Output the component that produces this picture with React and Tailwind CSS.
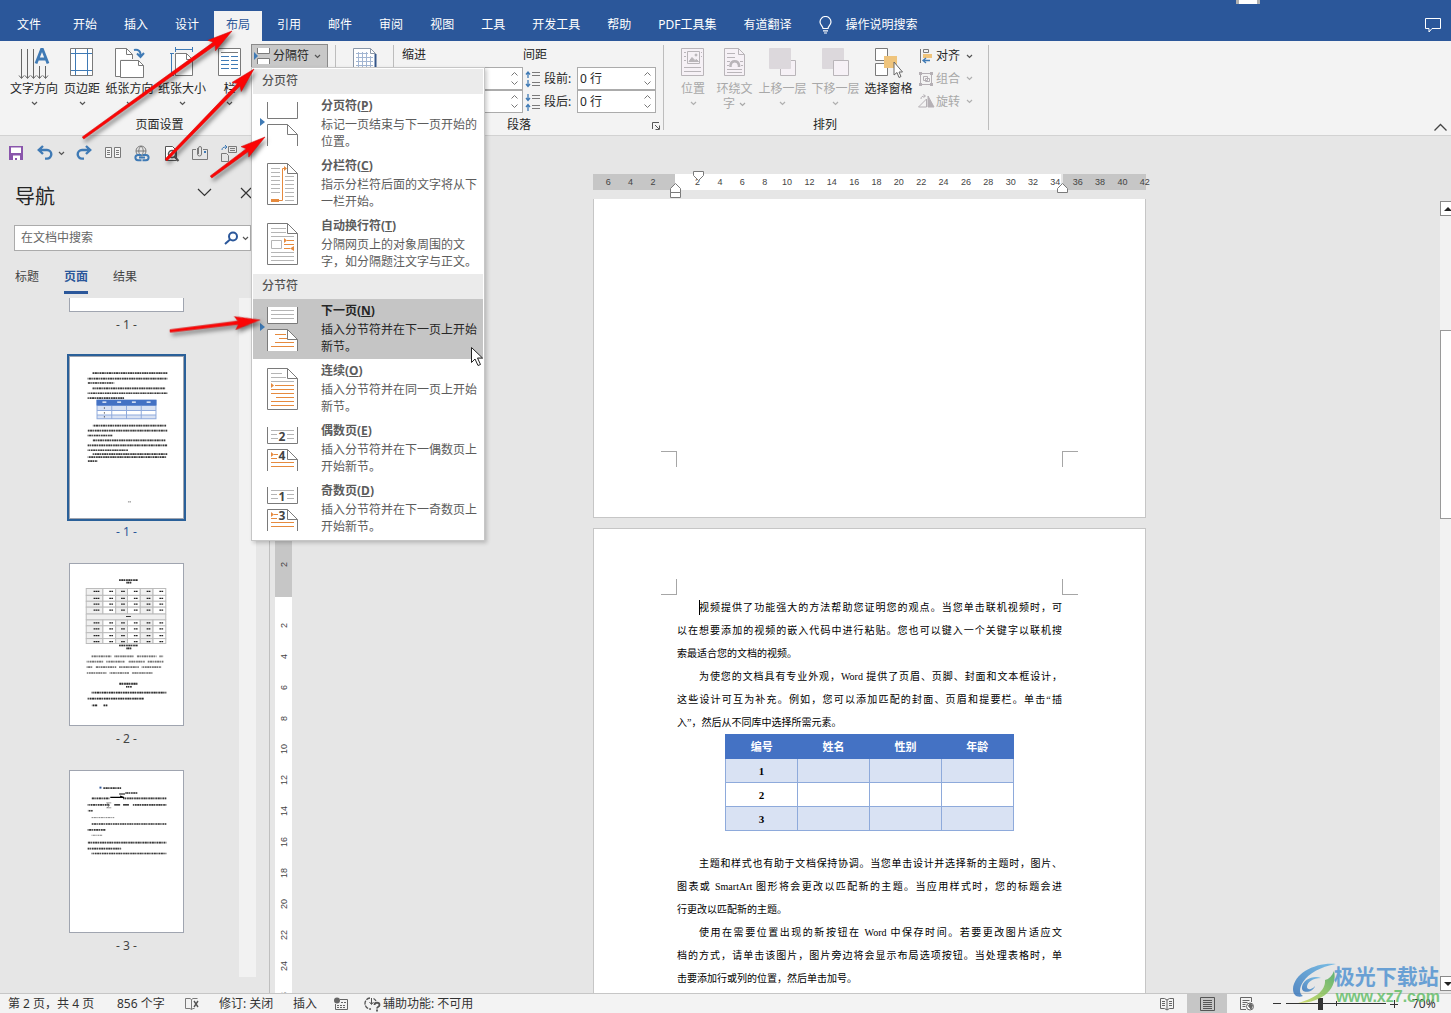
import React from "react";

const Caret = ({ className = "text-[#555]" }) => (
  <svg width="7" height="5" viewBox="0 0 7 5" className={`shrink-0 ${className}`} fill="none" stroke="currentColor" strokeWidth="1.2">
    <path d="M1 1l2.5 2.5L6 1" />
  </svg>
);

/* ---------- top tabs ---------- */

const TABS = ["开始", "插入", "设计", "布局", "引用", "邮件", "审阅", "视图", "工具", "开发工具", "帮助", "PDF工具集", "有道翻译"];

function TopTabs() {
  return (
    <header className="relative flex h-[41px] shrink-0 items-end bg-[#2b579a] pl-[5px] pr-[9px] text-white">
      <nav className="flex items-end gap-[3px]">
        <button className="mr-[5px] h-[30px] whitespace-nowrap px-3 pb-[3px]">文件</button>
        {TABS.map((t) => (
          <button
            key={t}
            className={`h-[30px] whitespace-nowrap px-3 pb-[3px] ${t === "布局" ? "bg-[#f3f3f3] text-[#2b579a]" : ""}`}
          >
            {t}
          </button>
        ))}
      </nav>
      <button className="ml-4 flex h-[30px] items-center gap-[13px] whitespace-nowrap pb-[3px]">
        <svg width="13" height="18" viewBox="0 0 13 18" fill="none" stroke="currentColor" strokeWidth="1.2">
          <path d="M4 12.500c0-2.500-3-3.500-3-6.500a5.300 5.300 0 0 1 11 0c0 3-3 4-3 6.500zM4 14.800h5M5 17h3" />
        </svg>
        操作说明搜索
      </button>
      <button aria-label="批注" className="mb-[7px] ml-auto">
        <svg width="17" height="16" viewBox="0 0 17 16" fill="none" stroke="currentColor" strokeWidth="1">
          <path d="M.5.5h15v10H7l-3 3.500v-3.500H.5z" />
        </svg>
      </button>
      <span className="absolute right-[191px] top-0 h-1 w-6 border-x-[3px] border-[#b0b0b0] bg-white" />
    </header>
  );
}

/* ---------- ribbon icons ---------- */

const G = "#7a7a7a";
const B = "#3f7ab5";

const TextDirIcon = () => (
  <svg width="32" height="34" viewBox="0 0 32 34" fill="none" stroke="#666">
    <path d="M3.500 2v29M9.500 2v29M15.500 2v29M21.500 19v12M27.500 19v12" />
    <path d="M1 28.500l2.500 3 2.500-3M7 28.500l2.500 3 2.500-3M13 28.500l2.500 3 2.500-3M19 28.500l2.500 3 2.500-3M25 28.500l2.500 3 2.500-3" />
    <path d="M18 16.500L23.500 2.500h1L30 16.500M20 12h8" stroke={B} strokeWidth="2.800" />
  </svg>
);
const MarginIcon = () => (
  <svg width="24" height="30" viewBox="0 0 24 30" fill="none">
    <path d="M.5 1.500h22v27H.5z" fill="#fff" stroke={G} />
    <path d="M5.500 2v26M17.500 2v26M1 6.500h21M1 23.500h21" stroke={B} />
  </svg>
);
const OrientIcon = () => (
  <svg width="30" height="32" viewBox="0 0 30 32" fill="none" stroke={G}>
    <path d="M.5 29.500v-28h11l6 6V12h-12v17.500z" fill="#fff" stroke="none" />
    <path d="M5 29.500H.5v-28h11l6 6V12M11.500 1.500v6h6" />
    <path d="M5.500 13.500h18l5 5v12h-23z" fill="#fff" />
    <path d="M23.500 13.500v5h5" />
    <path d="M19 3c4-1 7 1 6.500 6M22 6.500l3.500 3.500 3.500-4" stroke={B} strokeWidth="2" />
  </svg>
);
const SizeIcon = () => (
  <svg width="24" height="32" viewBox="0 0 24 32" fill="none">
    <path d="M5.500 6.500h11l6 6v16h-17z" fill="#fff" stroke={G} />
    <path d="M16.500 6.500v6h6" stroke={G} />
    <path d="M5 2.500h18M5.500 0v5M22.500 0v5M1.500 7v22M0 6.500h4M0 28.500h4" stroke={B} />
  </svg>
);
const ColumnsIcon = () => (
  <svg width="24" height="30" viewBox="0 0 24 30" fill="none">
    <path d="M.5 1.500h22v27H.5z" fill="#fff" stroke={G} />
    <path d="M3 5.500h17" stroke={G} />
    <path d="M3 9.500h8M3 13.500h8M3 17.500h8M3 21.500h8M13 9.500h7M13 13.500h7M13 17.500h7M13 21.500h7" stroke={B} />
  </svg>
);
const PosIcon = () => (
  <svg width="24" height="30" viewBox="0 0 24 30" fill="none" stroke="#b9b5b9">
    <path d="M.5 1.500h22v27H.5z" fill="#f6f1f6" />
    <path d="M6.500 4.500h12v12h-12z" />
    <path d="M8 14.500l3-4 3 3 1.500-1 2 2z" fill="#b9b5b9" />
    <circle cx="15" cy="8" r="1" fill="#b9b5b9" />
    <path d="M3 5.500h2M3 9.500h2M3 13.500h2M3 20.500h17M3 24.500h17M20 5.500h1M20 9.500h1" />
  </svg>
);
const WrapIcon = () => (
  <svg width="24" height="30" viewBox="0 0 24 30" fill="none" stroke="#b9b5b9">
    <path d="M1.500 1.500h14l6 6v21h-20z" fill="#f6f1f6" />
    <path d="M15.500 1.500v6h6M4 6.500h8M4 10.500h8M4 22.500h15M4 25.500h15M4 14.500h3M17 14.500h3M4 18.500h2M18 18.500h2" />
    <path d="M7.500 20v-2a4.300 4.300 0 0 1 8.500 0v2" strokeWidth="2.500" />
  </svg>
);
const FrontIcon = () => (
  <svg width="28" height="30" viewBox="0 0 28 30" fill="none" stroke="#b9b5b9">
    <path d="M11.500 13.500h15v15h-15z" fill="#f6f1f6" />
    <path d="M.5 1.500h21v20h-21z" fill="#dcd8dc" stroke="#dcd8dc" />
  </svg>
);
const BackIcon = () => (
  <svg width="28" height="30" viewBox="0 0 28 30" fill="none" stroke="#b9b5b9">
    <path d="M.5 1.500h21v20h-21z" fill="#dcd8dc" stroke="#dcd8dc" />
    <path d="M11.500 13.500h15v15h-15z" fill="#f6f1f6" />
  </svg>
);
const PaneIcon = () => (
  <svg width="28" height="32" viewBox="0 0 28 32">
    <path d="M.5 1.500h12v12H.5zM.5 16.500h12v12H.5z" fill="#fff" stroke={G} />
    <path d="M9 9h13v12H9z" fill="#efc47c" />
    <path d="M19 15v13l3-2.500 2 5 2-1-2-4.500h3.500z" fill="#fff" stroke="#666" />
  </svg>
);
const BreakIcon = () => (
  <svg width="16" height="16" viewBox="0 0 16 16" fill="none">
    <path d="M3.500 0v5.500h12V0M3.500 16V10.500h12V16" fill="#fff" stroke={G} />
    <path d="M0 4l4 4-4 4z" fill={B} />
  </svg>
);

function BigButton({ icon, label, width, disabled, caret = true, wrap }) {
  return (
    <button disabled={disabled} className={`flex flex-col items-center ${width} ${disabled ? "text-[#a8a8a8]" : "text-[#262626]"}`}>
      <span className="flex h-9 items-start justify-center pt-[2px]">{icon}</span>
      <span className="whitespace-nowrap leading-4">{label}</span>
      {wrap ? (
        <span className="flex items-center gap-1 leading-[14px]">
          {wrap}
          <Caret className="text-[#a8a8a8]" />
        </span>
      ) : (
        caret && <Caret className={disabled ? "mt-1 text-[#b0b0b0]" : "mt-1 text-[#555]"} />
      )}
    </button>
  );
}

function Spin({ label, value, width }) {
  return (
    <span className={`flex h-[23px] border border-[#ababab] bg-white ${width}`}>
      <input aria-label={label} defaultValue={value} className="w-0 min-w-0 flex-1 bg-transparent pl-[2px] text-[#262626] outline-none" />
      <span className="flex w-4 flex-col items-center justify-center gap-[5px] text-[#777]">
        <button aria-label={`${label}增加`}>
          <svg width="7" height="4" viewBox="0 0 7 4" fill="none" stroke="currentColor"><path d="M.5 3.500l3-3 3 3" /></svg>
        </button>
        <button aria-label={`${label}减少`}>
          <svg width="7" height="4" viewBox="0 0 7 4" fill="none" stroke="currentColor"><path d="M.5.5l3 3 3-3" /></svg>
        </button>
      </span>
    </span>
  );
}

const SpacingIcon = ({ after }) => (
  <svg width="16" height="18" viewBox="0 0 16 18" fill="none">
    <path d="M7 2.500h8M7 5.500h8M7 12.500h8M7 15.500h8" stroke={G} />
    <path d={after ? "M3 1v6M1 5l2 2.500L5 5M3 18v-6M1 14l2-2.500L5 14" : "M3 8V2M1 4.500L3 2l2 2.500M3 10v6M1 14l2 2.500L5 14"} stroke={B} strokeWidth="1.300" />
  </svg>
);

/* ---------- breaks menu ---------- */

const OR = "#e68a3e";
const GR = "#b5b5b5";

const SheetPic = () => (
  <>
    <path d="M6.500 1.500h20l10 10v31h-30z" fill="#fff" stroke={G} />
    <path d="M26.500 1.500v10h10" fill="none" stroke={G} />
  </>
);
const SplitPic = () => (
  <>
    <path d="M6.500 0v16.500h30V0M6.500 44V22.500h20l10 10V44" fill="#fff" stroke={G} />
    <path d="M26.500 22.500v10h10" fill="none" stroke={G} />
  </>
);

const PICS = {
  page: (
    <>
      <SplitPic />
      <path d="M-1 16l5 4-5 4z" fill={B} />
    </>
  ),
  column: (
    <>
      <SheetPic />
      <path d="M10 6.500h9M10 10.500h9M10 14.500h9M10 18.500h9M10 22.500h9M10 26.500h9M10 30.500h9M24 14.500h9M24 18.500h9M24 22.500h9M24 26.500h9M24 30.500h9M24 34.500h9M24 38.500h9" stroke={GR} />
      <path d="M18 38.500h3.500v-32H25" stroke={OR} fill="none" />
      <path d="M10 37h8v3h-8zM23 4l3 2.500-3 2.500z" fill={OR} />
    </>
  ),
  wrap: (
    <>
      <SheetPic />
      <path d="M10 6.500h15M10 10.500h15M10 14.500h23M10 30.500h23M10 34.500h23M10 38.500h23" stroke={GR} />
      <path d="M10.500 18.500h10v8h-10z" stroke={GR} fill="none" />
      <path d="M26 18.500h7M23 22.500h10M23 26.500h6" stroke={OR} />
      <path d="M23 16l3 2.500-3 2.500zM33 24l-4 2.500 4 2.500z" fill={OR} />
    </>
  ),
  next: (
    <>
      <SplitPic />
      <path d="M10 3.500h23M10 7.500h23M10 11.500h23" stroke={GR} />
      <path d="M14 27.500h11M18 31.500h8M14 35.500h19M10 39.500h23" stroke={OR} />
      <path d="M-1 16l5 4-5 4z" fill={B} />
    </>
  ),
  cont: (
    <>
      <SheetPic />
      <path d="M10 6.500h11M10 10.500h15M10 14.500h23" stroke={GR} />
      <path d="M14 18.500h19M10 22.500h23M10 26.500h23M15 30.500h18M10 34.500h23M10 38.500h23" stroke={OR} />
      <path d="M10 16l3 2.500-3 2.500z" fill={OR} />
    </>
  ),
};
const numPic = (a, b) => (
  <>
    <SplitPic />
    <path d="M10 3.500h23M10 7.500h6M26 7.500h7M10 11.500h7M26 11.500h7" stroke={GR} />
    <path d="M13 27.500h4M10 31.500h6M10 35.500h23M10 39.500h23" stroke={OR} />
    <path d="M10 25l3 2.500-3 2.500z" fill={OR} />
    <text x="21" y="14" textAnchor="middle" fontSize="12" fontWeight="700" fill="#444">{a}</text>
    <text x="21" y="33" textAnchor="middle" fontSize="12" fontWeight="700" fill="#444">{b}</text>
  </>
);

const PAGE_BREAKS = [
  ["分页符", "P", "标记一页结束与下一页开始的位置。", PICS.page],
  ["分栏符", "C", "指示分栏符后面的文字将从下一栏开始。", PICS.column],
  ["自动换行符", "T", "分隔网页上的对象周围的文字，如分隔题注文字与正文。", PICS.wrap],
];
const SECTION_BREAKS = [
  ["下一页", "N", "插入分节符并在下一页上开始新节。", PICS.next],
  ["连续", "O", "插入分节符并在同一页上开始新节。", PICS.cont],
  ["偶数页", "E", "插入分节符并在下一偶数页上开始新节。", numPic(2, 4)],
  ["奇数页", "D", "插入分节符并在下一奇数页上开始新节。", numPic(1, 3)],
];

function MenuGroup({ title, items }) {
  return (
    <div role="group" aria-label={title}>
      <div className="flex h-[25px] items-center bg-[#ebebeb] pb-[2px] pl-[9px] font-medium text-[#555]">{title}</div>
      {items.map(([name, key, desc, pic]) => {
        const on = key === "N";
        return (
          <button
            key={key}
            role="menuitem"
            className={`flex h-[60px] w-full items-start pl-2 text-left ${on ? "bg-[#c5c5c5] text-[#262626]" : "text-[#5c5c5c]"}`}
          >
            <svg width="40" height="44" viewBox="0 0 40 44" className="mt-2 shrink-0 overflow-visible">{pic}</svg>
            <span className="ml-5 w-[160px] pt-[3px] leading-[17px]">
              <span className="mb-[2px] block font-bold">
                {name}(<u>{key}</u>)
              </span>
              <span className="block">{desc}</span>
            </span>
          </button>
        );
      })}
    </div>
  );
}

function BreaksMenu() {
  return (
    <div role="menu" className="absolute left-0 top-[23px] z-30 w-[234px] border border-[#c6c6c6] bg-white p-px shadow-[2px_2px_4px_rgba(0,0,0,0.2)]">
      <MenuGroup title="分页符" items={PAGE_BREAKS} />
      <MenuGroup title="分节符" items={SECTION_BREAKS} />
    </div>
  );
}

/* ---------- ribbon ---------- */

const Sep = () => <span className="mb-[5px] mt-1 w-px shrink-0 bg-[#bdbdbd]" />;

function Ribbon() {
  return (
    <section className="flex h-[95px] shrink-0 border-b border-[#d2d2d2] bg-[#f3f3f3] text-[#262626]">
      <div className="flex shrink-0 flex-col">
        <div className="flex flex-1 pl-[7px] pr-[7px] pt-[3px]">
          <div className="flex items-start pt-[1px]">
            <BigButton icon={<TextDirIcon />} label="文字方向" width="w-[54px]" />
            <BigButton icon={<MarginIcon />} label="页边距" width="w-[42px]" />
            <BigButton icon={<OrientIcon />} label="纸张方向" width="w-[53px]" />
            <BigButton icon={<SizeIcon />} label="纸张大小" width="w-[52px]" />
            <BigButton icon={<ColumnsIcon />} label="栏" width="w-[43px]" />
          </div>
          <div className="relative">
            <button aria-haspopup="menu" aria-expanded="true" className="flex h-6 w-[77px] items-center border border-[#8a8a8a] bg-[#c8c8c8] pl-[2px]">
              <BreakIcon />
              <span className="ml-[3px] mr-[5px] whitespace-nowrap">分隔符</span>
              <Caret />
            </button>
            <BreaksMenu />
          </div>
        </div>
        <div className="h-[21px] pr-4 text-center leading-[22px]">页面设置</div>
      </div>
      <Sep />
      <div className="flex w-[57px] shrink-0 justify-center pt-[7px]">
        <svg width="24" height="30" viewBox="0 0 24 30" fill="none">
          <path d="M.5.5h17l5 5v24H.5z" fill="#fff" stroke="#8a97a8" />
          <path d="M17.500.5v5h5" stroke="#8a97a8" />
          <path d="M3 5.500h12M3 9.500h17M3 13.500h17M3 17.500h17M3 21.500h17M5.500 4v22M9.500 4v22M13.500 4v22M17.500 8v18" stroke="#a3b6d2" />
          <path d="M22.500 6v23" stroke="#34568a" strokeWidth="2" />
        </svg>
      </div>
      <Sep />
      <div className="flex shrink-0 flex-col">
        <div className="flex flex-1 pr-[7px]">
          <div className="w-[129px] pl-2">
            <div className="h-[26px] pt-[6px] leading-4">缩进</div>
            <Spin label="左缩进" value="" width="w-[121px]" />
            <Spin label="右缩进" value="" width="w-[121px]" />
          </div>
          <div className="pl-[2px]">
            <div className="h-[26px] pt-[6px] leading-4 -indent-[2px]">间距</div>
            <label className="flex items-center"><SpacingIcon /><span className="w-9 whitespace-nowrap pl-[3px]">段前:</span><Spin label="段前" value="0 行" width="w-[79px]" /></label>
            <label className="flex items-center"><SpacingIcon after /><span className="w-9 whitespace-nowrap pl-[3px]">段后:</span><Spin label="段后" value="0 行" width="w-[79px]" /></label>
          </div>
        </div>
        <div className="flex h-[21px] items-start pl-[2px] pr-[3px] leading-[22px]">
          <span className="flex-1 pr-[10px] text-center">段落</span>
          <button aria-label="段落设置" className="flex pt-[8px]">
            <svg width="8" height="8" viewBox="0 0 8 8" fill="none" stroke="#555"><path d="M.5 7V.5H7M3 3l4 4M7.500 3.500v4h-4" /></svg>
          </button>
        </div>
      </div>
      <Sep />
      <div className="flex shrink-0 flex-col">
        <div className="flex flex-1 items-start pl-[9px] pr-[15px] pt-1">
          <BigButton icon={<PosIcon />} label="位置" width="w-10" disabled />
          <BigButton icon={<WrapIcon />} label="环绕文" wrap="字" width="w-[43px]" disabled />
          <BigButton icon={<FrontIcon />} label="上移一层" width="w-[53px]" disabled />
          <BigButton icon={<BackIcon />} label="下移一层" width="w-[53px]" disabled />
          <BigButton icon={<PaneIcon />} label="选择窗格" width="w-[53px]" caret={false} />
          <div className="flex flex-col pl-[3px]">
            <button className="flex h-[22px] items-center">
              <svg width="18" height="16" viewBox="0 0 18 16" fill="none"><path d="M2.500 1v14" stroke={G} /><path d="M5.500 1.500h5v3h-5z" stroke={G} /><path d="M5 6h9v4H5z" fill="#efc47c" /><path d="M5 12.500h7M8 10l-3 2.500L8 15" stroke={B} strokeWidth="1.300" /></svg>
              <span className="mr-[6px] whitespace-nowrap">对齐</span><Caret />
            </button>
            <button disabled className="flex h-[23px] items-center text-[#a8a8a8]">
              <svg width="18" height="16" viewBox="0 0 18 16" fill="none" stroke="#b5b0b5"><path d="M4 2.500h8M4 13.500h8M2.500 4v8M13.500 4v8M5.500 5.500h4v4h-4zM7.500 7.500h4v3h-4z" /><path d="M1 1h3v3H1zM12 1h3v3h-3zM1 12h3v3H1zM12 12h3v3h-3z" fill="#b5b0b5" stroke="none" /></svg>
              <span className="mr-[6px] whitespace-nowrap">组合</span><Caret className="text-[#b0b0b0]" />
            </button>
            <button disabled className="flex h-[23px] items-center text-[#a8a8a8]">
              <svg width="18" height="16" viewBox="0 0 18 16" fill="none" stroke="#b5b0b5"><path d="M8.500 5v8h-8z" /><path d="M10 2v11h6z" fill="#b5b0b5" /><path d="M3 5c0-2 1-3 4-3M5.500.5L7.500 2l-2 1.500" /></svg>
              <span className="mr-[6px] whitespace-nowrap">旋转</span><Caret className="text-[#b0b0b0]" />
            </button>
          </div>
        </div>
        <div className="h-[21px] pr-[2px] text-center leading-[22px]">排列</div>
      </div>
      <Sep />
      <button aria-label="折叠功能区" className="mb-1 ml-auto mr-1 self-end">
        <svg width="13" height="8" viewBox="0 0 13 8" fill="none" stroke="#444" strokeWidth="1.300"><path d="M.5 7.500l6-6 6 6" /></svg>
      </button>
    </section>
  );
}

/* ---------- quick access ---------- */

function QuickAccess() {
  return (
    <div className="flex h-[34px] shrink-0 items-center bg-[#e6e6e6] pl-2">
      <button aria-label="保存"><svg width="16" height="16" viewBox="0 0 16 16"><path d="M1 1h14v14H1z" fill="#8a56ac" /><path d="M3 2.500h10V8H3zM5 10.500h7V15H9v-2H7v2H5z" fill="#fff" /></svg></button>
      <button aria-label="撤消" className="ml-[13px]"><svg width="16" height="16" viewBox="0 0 16 16" fill="none" stroke={B} strokeWidth="2.400"><path d="M6 1L1.800 5 6 9M2 5h8a4.300 4.300 0 0 1 0 8.600H8" /></svg></button>
      <button aria-label="撤消选项" className="ml-[5px]"><Caret /></button>
      <button aria-label="恢复" className="ml-[11px]"><svg width="16" height="16" viewBox="0 0 16 16" fill="none" stroke={B} strokeWidth="2.400"><path d="M10 1l4.200 4L10 9M14 5H6a4.300 4.300 0 0 0 0 8.600h2" /></svg></button>
      <button aria-label="并排" className="ml-[13px]"><svg width="17" height="16" viewBox="0 0 17 16" fill="none" stroke={G}><path d="M.5 2.500h6v10h-6zM9.500 2.500h6v10h-6z" fill="#f5f5f5" /><path d="M2 5.500h3M2 7.500h3M2 9.500h3M11 5.500h3M11 7.500h3M11 9.500h3" /></svg></button>
      <button aria-label="链接" className="ml-3"><svg width="16" height="17" viewBox="0 0 16 17" fill="none"><circle cx="7" cy="6" r="5" stroke={G} /><path d="M2 6h10M7 1c-3 3-3 7 0 10M7 1c3 3 3 7 0 10" stroke={G} /><path d="M7.500 10H4a2.500 2.500 0 0 0 0 5.200h3.500M8.500 10H12a2.500 2.500 0 0 1 0 5.200H8.500M5 12.600h6" stroke={B} strokeWidth="2" /></svg></button>
      <button aria-label="打印预览" className="ml-[14px]"><svg width="16" height="17" viewBox="0 0 16 17" fill="none"><path d="M1.500 1.500h7l4 4v10h-11z" fill="#fff" stroke="#555" /><circle cx="8" cy="9" r="3.500" stroke="#555" strokeWidth="1.500" /><path d="M10.500 11.500L14.500 16" stroke="#555" strokeWidth="2" /></svg></button>
      <button aria-label="附件" className="ml-3"><svg width="17" height="16" viewBox="0 0 17 16" fill="none" stroke={G}><path d="M4 4.500H.5v10h15v-10H11" /><path d="M5.500 3v6a2 2 0 0 0 4 0V3a1.500 1.500 0 0 0-3 0v6" /><path d="M12 6h2v2h-2z" fill={B} stroke="none" /></svg></button>
      <button aria-label="粘贴" className="ml-3"><svg width="17" height="17" viewBox="0 0 17 17" fill="none" stroke={G}><path d="M7.500 1.500h8v6h-8zM9 3.500h5M9 5.500h5M.5 8.500h5l2 2v6h-7z" /><path d="M1 5c0-2 1-3 4-3M4 0l2 2-2 2" stroke={B} /></svg></button>
    </div>
  );
}

/* ---------- navigation pane ---------- */

function Greek({ lines, color = "#333" }) {
  return lines.map(([y, x1, x2, w = 1.7], i) => (
    <g key={i}>
      <path d={`M${x1} ${y}H${x2}`} stroke={color} strokeWidth={w} opacity="0.3" />
      <path d={`M${x1} ${y}H${x2}`} stroke={color} strokeWidth={w} strokeDasharray="1.500 .8 2 .7 1 1.200" strokeDashoffset={i} opacity="0.75" />
    </g>
  ));
}

const ThumbOne = () => (
  <>
    <Greek color="#111" lines={[[16, 23, 99], [21.5, 18, 99], [26, 18, 45], [31.5, 23, 97], [36.5, 18, 99], [41.5, 18, 55], [69.5, 23, 98], [74.5, 18, 99], [79.5, 18, 43], [84.5, 23, 97], [89.5, 18, 99], [94.5, 18, 59], [98.5, 23, 99], [101.5, 18, 98], [105.5, 18, 28], [147, 59, 62, 0.6]]} />
    <path d="M27 43h61v20H27z" fill="#8faadc" />
    <path d="M27 43h61v6H27z" fill="#4472c4" />
    <path d="M28 49.500h14v4H28zM43 49.500h14v4H43zM58 49.500h14v4H58zM73 49.500h14v4H73zM28 59h14v3H28zM43 59h14v3H43zM58 59h14v3H58zM73 59h14v3H73z" fill="#d9e2f3" />
    <path d="M28 54.500h14v3.500H28zM43 54.500h14v3.500H43zM58 54.500h14v3.500H58zM73 54.500h14v3.500H73z" fill="#fff" />
    <path d="M33 45.500h4M48 45.500h4M63 45.500h4M78 45.500h4" stroke="#fff" strokeWidth="1.500" />
    <path d="M34.500 51.500h1M34.500 56.500h1M34.500 60.500h1" stroke="#111" />
  </>
);

const ROWS = [24, 31, 37, 43, 50, 56, 62, 69, 75, 80];
const COLS = [16, 33, 46, 58, 71, 84, 97];
const ThumbTwo = () => (
  <>
    <Greek color="#000" lines={[[16, 50, 69], [18.5, 57, 63]]} />
    {ROWS.slice(0, -1).map((y, r) =>
      r === 4 ? (
        <g key={y}>
          <path d={`M16.500 ${y + 0.5}h81v6h-81z`} fill="#f0f0f0" stroke="#bbb" />
          <path d={`M57 ${y + 3}h5`} stroke="#333" />
        </g>
      ) : (
        COLS.slice(0, -1).map((x, c) => (
          <g key={`${x}-${y}`}>
            <rect x={x + 0.5} y={y + 0.5} width={COLS[c + 1] - x} height={ROWS[r + 1] - y} fill={c % 2 ? "#fff" : "#f0f0f0"} stroke="#bbb" />
            <path d={`M${COLS[c + 1] - (c ? 6 : 9)} ${y + 3.5}h${c ? 4 : 6}`} stroke="#222" strokeWidth="1.300" strokeDasharray="1.700 .4" />
          </g>
        ))
      )
    )}
    <Greek color="#000" lines={[[82.5, 50, 69], [85.5, 57, 63], [121.5, 50, 69, 2], [124.5, 57, 63], [130.5, 22, 98], [136.5, 18, 75], [143.5, 22, 28], [143.5, 34, 38]]} />
    <Greek color="#555" lines={[[93.5, 22, 42], [93.5, 45, 65], [93.5, 68, 88], [93.5, 91, 95], [99, 17, 34], [99, 37, 56], [99, 59, 76], [99, 79, 95], [104.5, 17, 23], [104.5, 26, 47], [104.5, 50, 70], [104.5, 73, 93], [110.5, 17, 37], [110.5, 40, 60], [110.5, 63, 84]]} />
  </>
);
const ThumbThree = () => (
  <>
    <path d="M30 15.500h2v2h-2z" fill="#2f5597" />
    <Greek color="#111" lines={[[17, 34, 52], [22, 56, 69], [27.5, 22, 40], [27.5, 54, 98], [34, 18, 40], [34, 64, 98], [40, 18, 23], [53.5, 22, 98], [59.5, 18, 36], [72.5, 18, 98], [78.5, 18, 52], [83.5, 22, 98]]} />
    <Greek color="#555" lines={[[47, 22, 45, 0.8], [65, 22, 33, 0.8]]} />
    <path d="M41 26.500h14l-4-1.500M50 23h6M45 34h6M54 34h6" stroke="#000" fill="none" strokeWidth="1.200" />
    <path d="M37 32h5M37 37h5M38 32l2 2.500-2 2.500" stroke="#555" fill="none" strokeWidth=".6" />
  </>
);

function Thumb({ label, selected, children }) {
  return (
    <li className="mb-[18px] flex flex-col items-center">
      <button aria-label={`第 ${label} 页`} className={`border-2 ${selected ? "border-[#2a6099]" : "border-transparent"}`}>
        <svg width="115" height="163" viewBox="0 0 115 163" className="block border border-[#a0a5b0] bg-white">{children}</svg>
      </button>
      <span className={`h-[22px] leading-[22px] ${selected ? "text-[#2b579a]" : "text-[#444]"}`}>- {label} -</span>
    </li>
  );
}

function NavPane() {
  return (
    <aside className="flex w-[270px] shrink-0 flex-col border-r border-[#bfbfbf] text-[#444]">
      <div className="flex h-[55px] items-center pl-[15px] pr-[17px]">
        <h2 className="pb-[2px] text-[20px] text-[#262626]">导航</h2>
        <button aria-label="窗格选项" className="mb-[10px] ml-auto"><svg width="15" height="9" viewBox="0 0 15 9" fill="none" stroke="#333" strokeWidth="1.200"><path d="M1 1l6.500 6.500L14 1" /></svg></button>
        <button aria-label="关闭" className="mb-[10px] ml-[28px]"><svg width="12" height="12" viewBox="0 0 12 12" fill="none" stroke="#333" strokeWidth="1.200"><path d="M1 1l10 10M11 1L1 11" /></svg></button>
      </div>
      <div className="ml-[14px] mr-[18px] flex h-[26px] shrink-0 items-center border border-[#ababab] bg-white">
        <input aria-label="在文档中搜索" placeholder="在文档中搜索" className="min-w-0 flex-1 pl-[6px] outline-none placeholder:text-[#666]" />
        <button aria-label="搜索"><svg width="15" height="14" viewBox="0 0 15 14" fill="none" stroke="#2b579a" strokeWidth="2"><circle cx="9" cy="5.500" r="4" /><path d="M6 8.500L1 13" /></svg></button>
        <button aria-label="搜索选项" className="ml-[3px] mr-px"><Caret /></button>
      </div>
      <div className="flex h-[43px] shrink-0 items-end gap-[25px] pl-[15px]">
        <button className="h-[34px] w-6 whitespace-nowrap">标题</button>
        <button className="h-[34px] w-6 whitespace-nowrap border-b-[3px] border-[#2b579a] pt-[3px] font-bold text-[#2b579a]">页面</button>
        <button className="h-[34px] w-6 whitespace-nowrap">结果</button>
      </div>
      <div className="mb-4 mt-1 flex min-h-0 flex-1 overflow-hidden">
        <ol className="ml-[14px] flex-1">
          <li className="mb-[18px] flex flex-col items-center">
            <span className="mb-[2px] h-[14px] w-[115px] border border-t-0 border-[#a0a5b0] bg-white" />
            <span className="h-[22px] leading-[22px]">- 1 -</span>
          </li>
          <Thumb label={1} selected><ThumbOne /></Thumb>
          <Thumb label={2}><ThumbTwo /></Thumb>
          <Thumb label={3}><ThumbThree /></Thumb>
        </ol>
        <span className="mr-[13px] w-[17px] bg-[#f2f2f2]" />
      </div>
    </aside>
  );
}

/* ---------- document ---------- */

const H_NUMS = [6, 4, 2, "", 2, 4, 6, 8, 10, 12, 14, 16, 18, 20, 22, 24, 26, 28, 30, 32, 34, 36, 38, 40, 42];
const V_NUMS = [2, 4, 6, 8, 10, 12, 14, 16, 18, 20, 22, 24, 26];

function HorizontalRuler() {
  return (
    <div className="relative mt-1 flex h-4 shrink-0 font-[family-name:'Liberation_Sans',sans-serif] text-[9px] text-[#444]">
      <span className="w-[82px] bg-[#c6c6c6]" />
      <span className="flex-1 bg-white" />
      <span className="ml-[2px] w-[83px] bg-[#c6c6c6]" />
      <div className="absolute -right-[10px] left-1 top-0 flex leading-[17px]">
        {H_NUMS.map((n, i) => (
          <span key={i} className="w-0 flex-1 text-center">{n}</span>
        ))}
      </div>
      <svg width="11" height="11" viewBox="0 0 11 11" className="absolute -top-[3px] left-[100px]" fill="#fff" stroke={G}><path d="M.5.5h10v4l-5 5-5-5z" /></svg>
      <svg width="11" height="16" viewBox="0 0 11 16" className="absolute left-[77px] top-[9px]" fill="#fff" stroke={G}><path d="M.5 9.500v-4l5-5 5 5v4zM.5 9.500h10v5H.5z" /></svg>
      <svg width="11" height="11" viewBox="0 0 11 11" className="absolute right-[78px] top-[9px]" fill="#fff" stroke={G}><path d="M.5 9.500v-4l5-5 5 5v4z" /></svg>
    </div>
  );
}

function VerticalRuler() {
  return (
    <div className="ml-[5px] flex w-[17px] shrink-0 flex-col overflow-hidden bg-white font-[family-name:'Liberation_Sans',sans-serif] text-[9px] text-[#444]">
      <div className="flex h-[427px] shrink-0 items-end justify-center bg-[#c6c6c6] pb-[30px]">
        <span className="rotate-180 [writing-mode:vertical-rl]">2</span>
      </div>
      <div className="flex flex-col pt-[13px]">
        {V_NUMS.map((n) => (
          <span key={n} className="flex h-[31px] shrink-0 items-center justify-center">
            <span className="rotate-180 [writing-mode:vertical-rl]">{n}</span>
          </span>
        ))}
      </div>
    </div>
  );
}

const Corner = ({ className }) => <span className={`h-4 w-4 border-[#a6a6a6] ${className}`} />;

function DocTable() {
  return (
    <table className="mx-auto w-[289px] table-fixed border-collapse text-center text-[11px] font-bold leading-[22px]">
      <thead>
        <tr className="h-6 bg-[#4472c4] text-white">
          {["编号", "姓名", "性别", "年龄"].map((h) => (
            <th key={h} className="border-y border-[#4472c4] p-0 first:border-l last:border-r">{h}</th>
          ))}
        </tr>
      </thead>
      <tbody>
        {[1, 2, 3].map((n) => (
          <tr key={n} className={n === 2 ? "h-6 bg-white" : "h-6 bg-[#d9e2f3]"}>
            <td className="border border-[#8eaadb] p-0">{n}</td>
            <td className="border border-[#8eaadb] p-0" />
            <td className="border border-[#8eaadb] p-0" />
            <td className="border border-[#8eaadb] p-0" />
          </tr>
        ))}
      </tbody>
    </table>
  );
}

/* Body text: each entry is a paragraph, each string in it a set line. */
const PARAS_TOP = [
  ["视频提供了功能强大的方法帮助您证明您的观点。当您单击联机视频时，可", "以在想要添加的视频的嵌入代码中进行粘贴。您也可以键入一个关键字以联机搜", "索最适合您的文档的视频。"],
  ["为使您的文档具有专业外观，Word 提供了页眉、页脚、封面和文本框设计，", "这些设计可互为补充。例如，您可以添加匹配的封面、页眉和提要栏。单击“插", "入”，然后从不同库中选择所需元素。"],
];
const PARAS_BOTTOM = [
  ["主题和样式也有助于文档保持协调。当您单击设计并选择新的主题时，图片、", "图表或 SmartArt 图形将会更改以匹配新的主题。当应用样式时，您的标题会进", "行更改以匹配新的主题。"],
  ["使用在需要位置出现的新按钮在 Word 中保存时间。若要更改图片适应文", "档的方式，请单击该图片，图片旁边将会显示布局选项按钮。当处理表格时，单", "击要添加行或列的位置，然后单击加号。"],
];

function Paragraph({ lines, caret }) {
  return (
    <p>
      {lines.map((l, i) => (
        <span
          key={i}
          className={`block whitespace-nowrap ${i === 0 ? "pl-[22px]" : ""} ${i < lines.length - 1 ? "[text-align-last:justify]" : ""}`}
        >
          {caret && i === 0 && <span className="absolute mt-1 h-[15px] w-px bg-black" />}
          {l}
        </span>
      ))}
    </p>
  );
}

function DocumentView() {
  return (
    <main className="flex min-w-0 flex-1 overflow-hidden">
      <VerticalRuler />
      <div className="flex min-w-0 flex-1 justify-center pl-[7px]">
        <div className="flex w-[553px] shrink-0 flex-col">
          <HorizontalRuler />
          <article className="mt-[9px] flex h-[319px] shrink-0 flex-col justify-end border border-t-0 border-[#c6c6c6] bg-white px-[67px] pb-[50px]">
            <div className="flex justify-between">
              <Corner className="border-r border-t" />
              <Corner className="border-l border-t" />
            </div>
          </article>
          <article className="mt-[10px] shrink-0 border border-[#c6c6c6] bg-white pb-20 pt-[50px] font-[family-name:'Liberation_Serif','Noto_Sans_CJK_SC',serif] text-[10px] leading-[23px] text-black">
            <div className="flex justify-between px-[67px]">
              <Corner className="border-b border-r" />
              <Corner className="border-b border-l" />
            </div>
            <div className="px-[83px] pt-px">
              {PARAS_TOP.map((lines, i) => <Paragraph key={i} lines={lines} caret={i === 0} />)}
              <DocTable />
              <div className="pt-[21px]">
                {PARAS_BOTTOM.map((lines, i) => <Paragraph key={i} lines={lines} />)}
              </div>
            </div>
          </article>
        </div>
      </div>
      <div className="flex w-[11px] shrink-0 flex-col overflow-hidden pb-[2px] pt-[31px]">
        <button aria-label="向上滚动" className="flex h-[15px] w-[17px] shrink-0 items-center border border-[#8a8a8a] bg-white pl-[3px]">
          <svg width="8" height="4" viewBox="0 0 8 4"><path d="M0 4l4-4 4 4z" fill="#222" /></svg>
        </button>
        <div className="w-[17px] flex-1 bg-[#f2f2f2] pt-[114px]">
          <div className="h-[189px] border border-[#9a9a9a] bg-white" />
        </div>
        <button aria-label="向下滚动" className="flex h-[15px] w-[17px] shrink-0 items-center border border-[#8a8a8a] bg-white pl-[3px]">
          <svg width="8" height="4" viewBox="0 0 8 4"><path d="M0 0l4 4 4-4z" fill="#222" /></svg>
        </button>
      </div>
    </main>
  );
}

/* ---------- status bar ---------- */

function StatusBar() {
  return (
    <footer className="flex h-5 shrink-0 items-center whitespace-nowrap border-t border-[#c6c6c6] bg-[#f3f3f3] pl-2 text-[#333]">
      <span className="w-[109px]">第 2 页，共 4 页</span>
      <span className="w-[67px]">856 个字</span>
      <svg width="16" height="14" viewBox="0 0 16 14" fill="none" stroke={G}><path d="M7.500 2.500L6 1.500H1.500v10H6l1.500 1 1.500-1h1.500M7.500 2.500v10M7.500 2.500L9 1.500h4.500" /><path d="M10 4l4 6M14 4l-4 6" stroke="#555" strokeWidth="1.400" /></svg>
      <span className="ml-[19px] w-[74px]">修订: 关闭</span>
      <span className="w-[41px]">插入</span>
      <svg width="14" height="14" viewBox="0 0 14 14" fill="none" stroke="#666"><path d="M6 2.500h7.500v10H1.500V7" /><path d="M3 8.500h9M3 10.500h9M7 5.500h5" strokeDasharray="2 1" /><circle cx="3" cy="3.500" r="3" fill="#666" stroke="none" /></svg>
      <svg width="17" height="16" viewBox="0 0 17 16" fill="none" stroke="#555" className="ml-4"><path d="M6 2a5.500 5.500 0 1 0 1 11M9.500 2.500c1 .5 2 1.500 2.500 2.500" strokeDasharray="4 1" strokeWidth="1.300" /><path d="M7.500 2v6M5.500 6l2 2.500 2-2.500" /><path d="M10.500 9c0-3 5-3 5 0 0 2-2.500 1.500-2.500 3.500M13 13.500v2" strokeWidth="1.800" /></svg>
      <span className="ml-[2px]">辅助功能: 不可用</span>
      <div className="ml-auto flex h-full items-center pr-[13px]">
        <button aria-label="阅读视图" className="flex h-full w-[41px] items-center justify-center"><svg width="14" height="14" viewBox="0 0 14 14" fill="none" stroke="#666"><path d="M.5 1.500h4l2.500 1.500 2.500-1.500h4v10h-4L7 13l-2.500-1.500h-4zM7 3v10M2 4.500h3M2 6.500h3M2 8.500h3M9 4.500h3M9 6.500h3M9 8.500h3" /></svg></button>
        <button aria-label="页面视图" className="flex h-full w-10 items-center justify-center bg-[#c6c6c6]"><svg width="15" height="14" viewBox="0 0 15 14" fill="none" stroke="#555"><path d="M.5.5h14v13H.5zM3 3.500h9M3 5.500h9M3 7.500h9M3 9.500h9M3 11.500h9" /></svg></button>
        <button aria-label="Web 版式视图" className="flex h-full w-[39px] items-center justify-center"><svg width="14" height="14" viewBox="0 0 14 14" fill="none" stroke="#666"><path d="M6 12.500H.5V.5h11V5M2.500 3.500h7M2.500 5.500h5M2.500 7.500h3M2.500 9.500h3" /><circle cx="10" cy="9.500" r="3.500" fill="#fff" /><path d="M10 6.500l2.500 2-1.500 3.500L8.500 9z" fill="#666" /></svg></button>
        <button aria-label="缩小" className="ml-[7px] flex h-4 w-2 items-center"><span className="h-px w-2 bg-[#333]" /></button>
        <input
          type="range"
          aria-label="显示比例"
          min="0"
          max="100"
          defaultValue="34"
          className="ml-[5px] h-4 w-[100px] appearance-none bg-[linear-gradient(#333,#333),linear-gradient(#333,#333)] bg-[length:100%_1px,1px_5px] bg-center bg-no-repeat [&::-webkit-slider-thumb]:h-3 [&::-webkit-slider-thumb]:w-[5px] [&::-webkit-slider-thumb]:appearance-none [&::-webkit-slider-thumb]:bg-[#333]"
        />
        <button aria-label="放大" className="ml-1 flex h-4 w-2 items-center justify-center"><svg width="8" height="8" viewBox="0 0 8 8" stroke="#333"><path d="M0 4.500h8M4.500 0v8" /></svg></button>
        <span className="ml-[14px] w-[26px]">70%</span>
      </div>
    </footer>
  );
}

/* ---------- overlays ---------- */

function Arrow({ x1, y1, x2, y2 }) {
  const len = Math.hypot(x2 - x1, y2 - y1);
  const deg = (Math.atan2(y2 - y1, x2 - x1) * 180) / Math.PI;
  return (
    <g transform={`translate(${x1} ${y1}) rotate(${deg})`}>
      <path d={`M0 -1.300L${len - 22} -1.800L${len - 25} -6.500L${len} 0L${len - 25} 6.500L${len - 22} 1.800L0 1.300z`} fill="#fb0505" stroke="#d01010" strokeWidth=".5" strokeLinejoin="round" />
    </g>
  );
}

function Annotations() {
  return (
    <svg width="500" height="400" viewBox="0 0 500 400" className="pointer-events-none absolute left-0 top-0 z-40">
      <g className="drop-shadow-[2px_3px_2px_rgba(0,0,0,0.5)]">
        <Arrow x1={83} y1={138} x2={232} y2={31} />
        <Arrow x1={166} y1={160} x2={254} y2={69} />
        <Arrow x1={211} y1={177} x2={265} y2={137} />
        <Arrow x1={170} y1={331} x2={260} y2={320} />
      </g>
      <path d="M471.500 347.500v15l3.500-3.500 3 6.500 2.500-1-3-6.500h5z" fill="#fff" stroke="#222" />
    </svg>
  );
}

function Watermark() {
  return (
    <div className="pointer-events-none absolute bottom-2 right-[11px] z-40 flex items-end opacity-80">
      <svg width="46" height="42" viewBox="0 0 46 42" fill="none">
        <defs>
          <linearGradient id="wb" x1="0" y1="1" x2="1" y2="0"><stop offset="0" stopColor="#2f6fb8" /><stop offset="1" stopColor="#5fb4e6" /></linearGradient>
          <linearGradient id="wg" x1="0" y1="1" x2="1" y2="0"><stop offset="0" stopColor="#c9d94a" /><stop offset="1" stopColor="#3fa65a" /></linearGradient>
        </defs>
        <path d="M44 1C24-1 2 10 1 26c0 7 5 9 10 7-4-2-4-8 0-14C17 10 28 4 44 1z" fill="url(#wb)" />
        <path d="M42 8c4 16-10 32-36 32C22 36 34 28 33 17c4-1 7-4 9-9z" fill="url(#wg)" />
        <path d="M10 24c1-7 11-12 19-9-8 0-14 4-14 9 0 3 5 3 8-1-1 6-14 9-13 1z" fill="url(#wb)" />
      </svg>
      <div className="-ml-1 leading-none">
        <div className="text-[21px] font-bold leading-6 text-[#4a8fd0]">极光下载站</div>
        <div className="pl-[2px] font-[family-name:'Liberation_Sans',sans-serif] text-[16px] font-bold leading-[17px] text-[#5cbb62]">www.xz7.com</div>
      </div>
    </div>
  );
}

export default function App() {
  return (
    <div lang="zh-CN" className="relative flex h-screen flex-col overflow-hidden bg-[#e6e6e6] font-[family-name:'Noto_Sans','Noto_Sans_CJK_SC',sans-serif] text-[12px] leading-4">
      <TopTabs />
      <Ribbon />
      <QuickAccess />
      <div className="flex min-h-0 flex-1">
        <NavPane />
        <DocumentView />
      </div>
      <StatusBar />
      <Annotations />
      <Watermark />
    </div>
  );
}
